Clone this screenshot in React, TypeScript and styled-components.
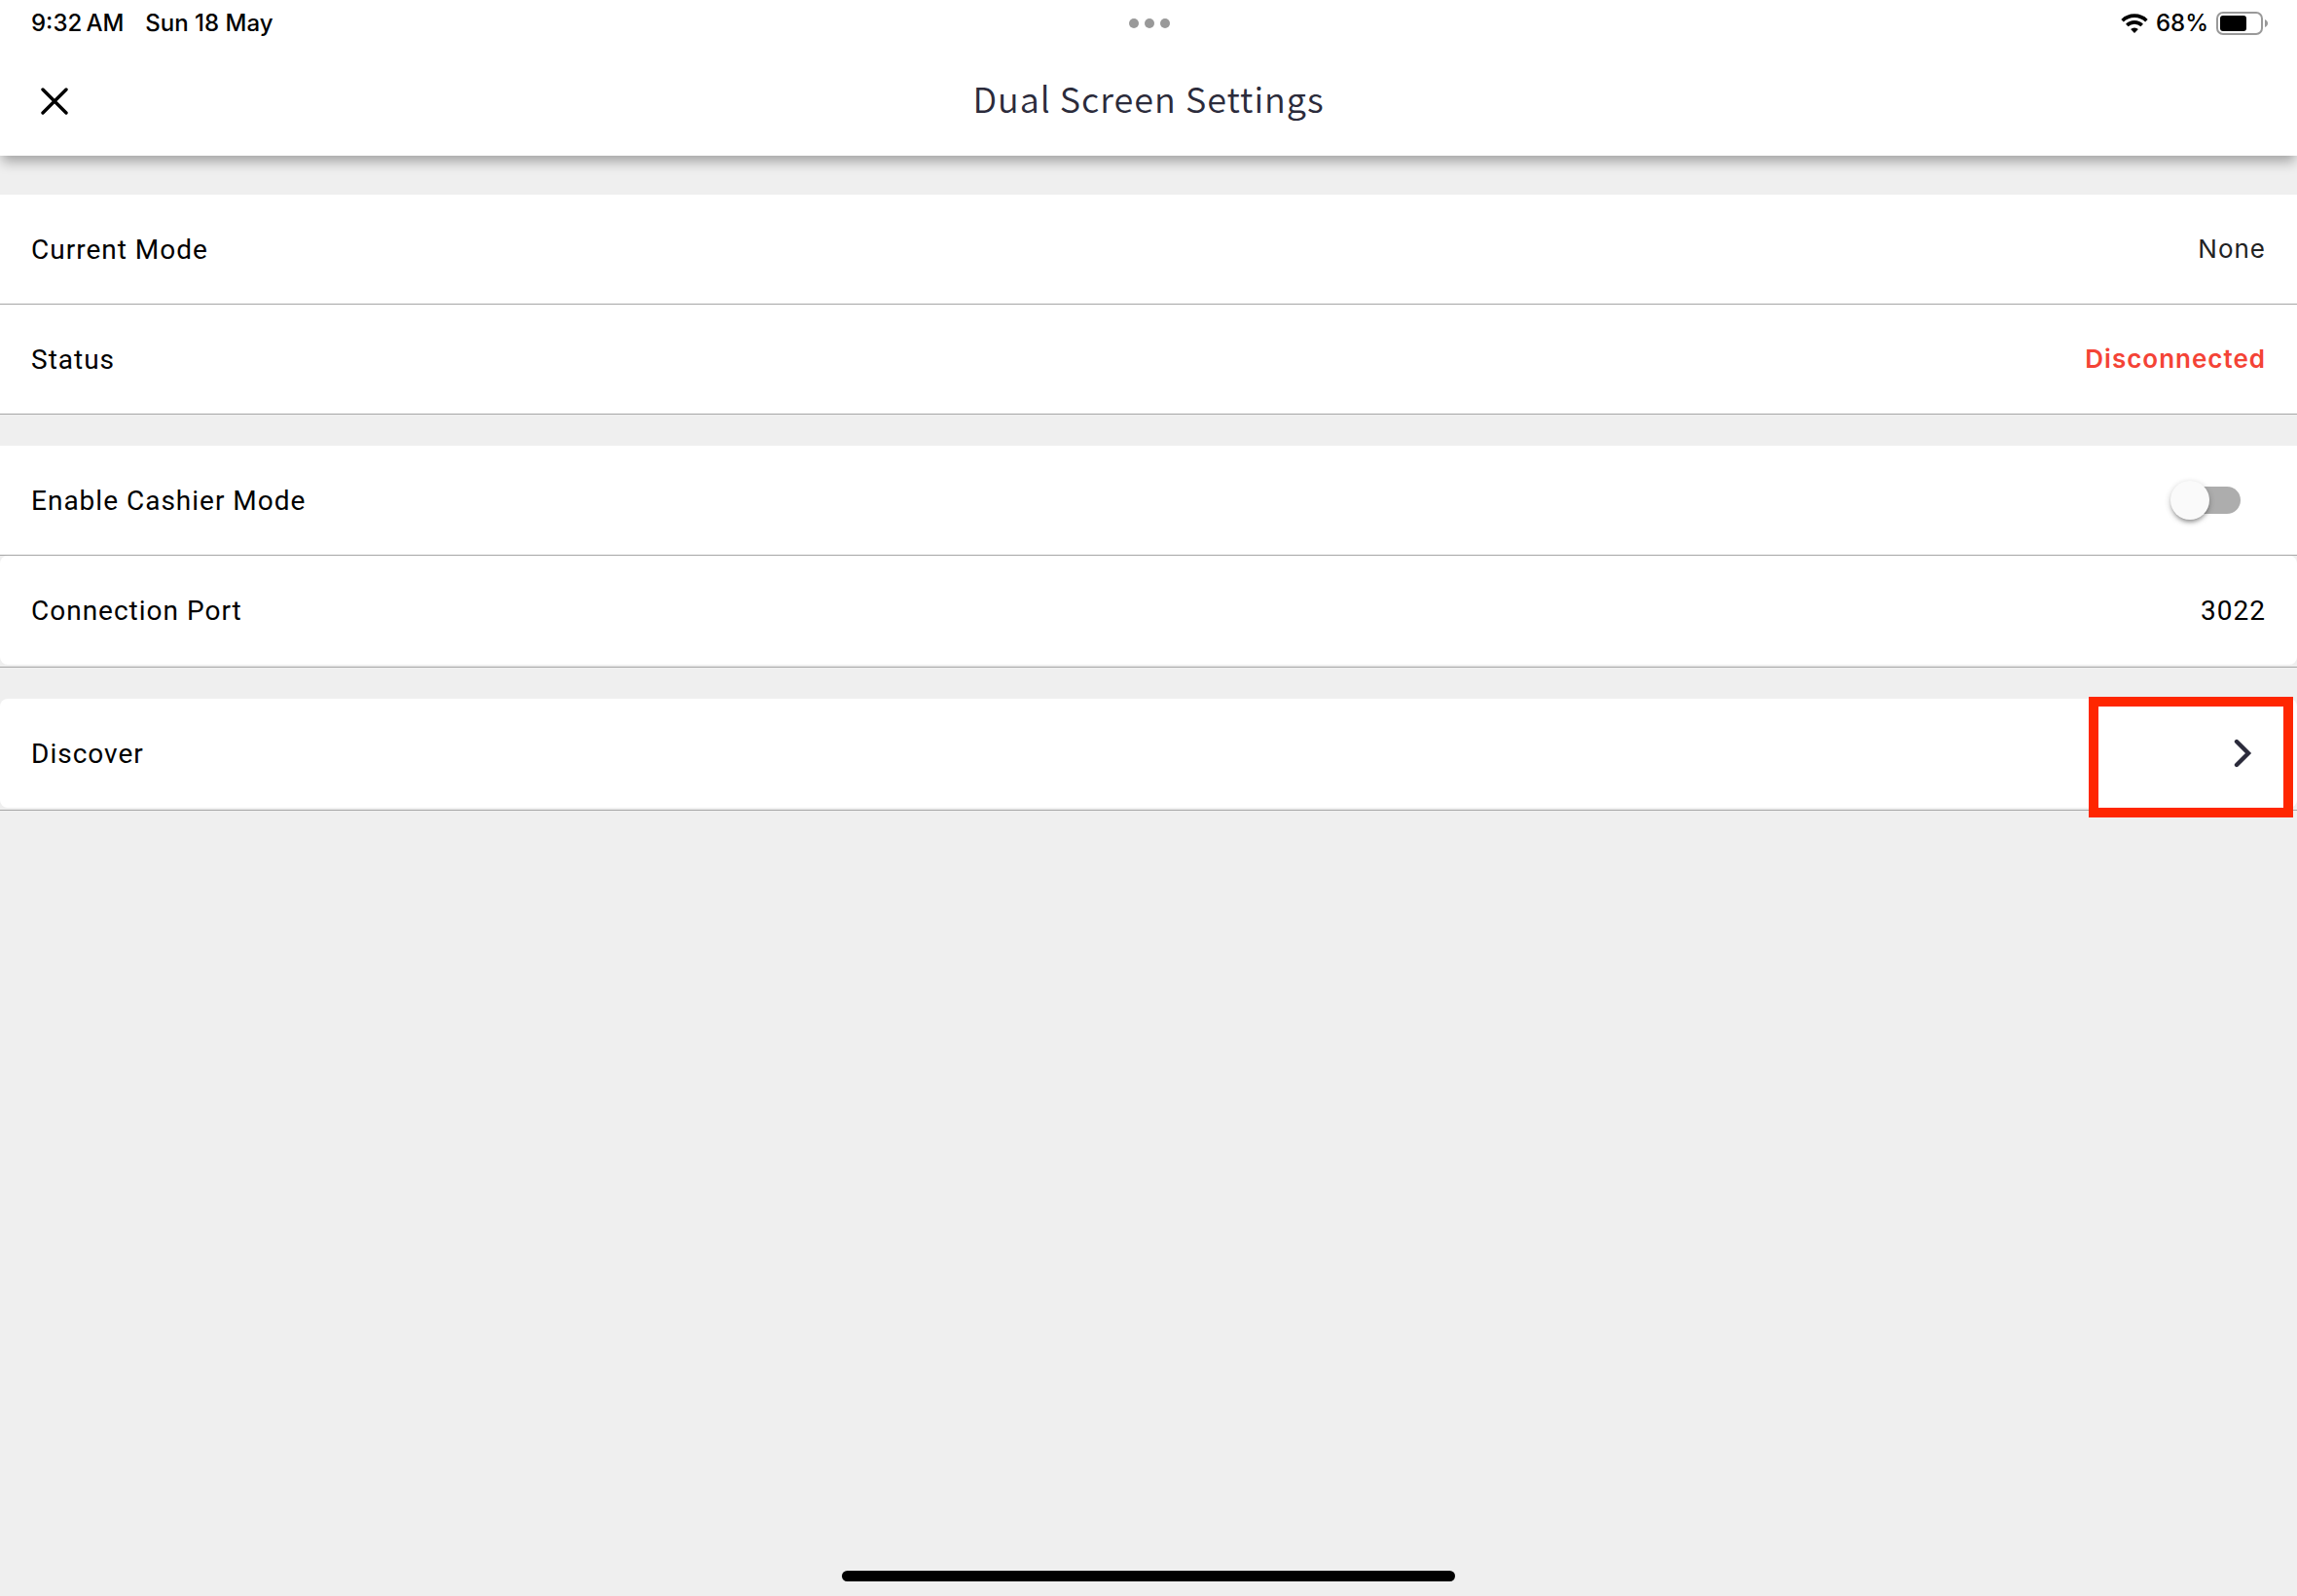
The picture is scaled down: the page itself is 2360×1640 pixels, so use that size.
import React, { useState } from "react";
import styled, { createGlobalStyle } from "styled-components";

const GlobalStyle = createGlobalStyle`
  * { box-sizing: border-box; }
  body { margin: 0; background: #efefef; }
`;

const roboto = `Roboto, "Noto Sans", sans-serif`;
const system = `Inter, "Liberation Sans", sans-serif`;

const Page = styled.div`
  display: flex;
  flex-direction: column;
  min-height: 100vh;
  background: #efefef;
  color: #000;
  font-family: ${roboto};
`;

const Header = styled.header`
  background: #fff;
  box-shadow: 0 8px 12px -2px rgba(0, 0, 0, 0.32);
`;

const StatusBar = styled.div`
  display: grid;
  grid-template-columns: 1fr auto 1fr;
  align-items: center;
  height: 48px;
  padding: 0 30px 0 32px;
  font: 500 24px/32px ${system};
`;

const StatusGroup = styled.div<{ $end?: boolean; $gap: number }>`
  display: flex;
  align-items: center;
  justify-content: ${(p) => (p.$end ? "flex-end" : "flex-start")};
  gap: ${(p) => p.$gap}px;
`;

const Dots = styled.div`
  display: flex;
  gap: 6px;
`;

const Dot = styled.span`
  width: 10px;
  height: 10px;
  border-radius: 50%;
  background: #999;
`;

const TitleBar = styled.div`
  display: grid;
  grid-template-columns: 1fr auto 1fr;
  align-items: center;
  height: 112px;
  padding: 0 32px;
`;

const CloseButton = styled.button`
  display: flex;
  align-items: center;
  justify-content: center;
  width: 48px;
  height: 48px;
  padding: 0;
  border: 0;
  background: none;
  cursor: pointer;
`;

const Title = styled.h1`
  margin: 0;
  padding-bottom: 8px;
  color: #2b2b3b;
  font: 350 36px/48px "Noto Sans CJK SC", "Noto Sans", sans-serif;
  letter-spacing: 1px;
`;

const Settings = styled.main`
  display: flex;
  flex-direction: column;
  gap: 32px;
  padding-top: 40px;
`;

const Group = styled.section`
  display: flex;
  flex-direction: column;
`;

const Item = styled.div<{ $card?: boolean }>`
  position: relative;
  padding-bottom: ${(p) => (p.$card ? 2 : 0)}px;
  border-bottom: 1px solid #a6a6a6;
`;

const Row = styled.div<{ $card?: boolean }>`
  display: flex;
  align-items: center;
  justify-content: space-between;
  width: 100%;
  height: 112px;
  padding: 0 32px;
  border: 0;
  border-radius: ${(p) => (p.$card ? 8 : 0)}px;
  background: #fff;
  color: #000;
  text-align: left;
  font: 400 28px/36px ${roboto};
  letter-spacing: 1px;
`;

const Label = styled.span`
  padding-top: 2px;
`;

const Value = styled.span<{ $alert?: boolean }>`
  color: ${(p) => (p.$alert ? "#f44336" : "#222")};
  font-family: ${system};
  font-size: 26px;
  font-weight: ${(p) => (p.$alert ? 600 : 400)};
`;

const PortInput = styled.input`
  width: 240px;
  padding: 2px 0 0;
  border: 0;
  background: none;
  color: inherit;
  font: inherit;
  letter-spacing: inherit;
  text-align: right;
`;

const Switch = styled.input`
  appearance: none;
  display: flex;
  align-items: center;
  width: 66px;
  height: 28px;
  margin: 0 26px;
  border-radius: 14px;
  background: #adadad;
  cursor: pointer;

  &::before {
    content: "";
    width: 40px;
    height: 40px;
    flex: none;
    margin-left: -6px;
    border-radius: 50%;
    background: #fafafa;
    box-shadow: 0 4px 4px -2px rgba(0, 0, 0, 0.3), 0 2px 6px rgba(0, 0, 0, 0.24);
  }

  &:checked {
    background: #80b0e8;
  }

  &:checked::before {
    margin-left: 32px;
  }
`;

const ChevronBox = styled.span`
  display: flex;
  justify-content: center;
  width: 48px;
`;

const Highlight = styled.div`
  position: absolute;
  top: -2px;
  right: 4px;
  bottom: -8px;
  width: 210px;
  border: 10px solid #ff2600;
  pointer-events: none;
`;

const HomeIndicator = styled.div`
  width: 630px;
  max-width: 80%;
  height: 11px;
  margin: auto auto 15px;
  border-radius: 6px;
  background: #000;
`;

const WifiIcon = () => (
  <svg width="28" height="20" viewBox="0 0 28 20" aria-hidden="true">
    <g fill="none" stroke="#000" strokeWidth="3.6">
      <path d="M1.6 7.2a17.8 17.8 0 0 1 24.8 0" />
      <path d="M6.3 12a11 11 0 0 1 15.4 0" />
    </g>
    <path d="M14 20l-3.9-3.9a5.6 5.6 0 0 1 7.8 0z" fill="#000" />
  </svg>
);

const BatteryIcon = () => (
  <svg width="53" height="24" viewBox="0 0 53 24" aria-hidden="true">
    <rect x="1" y="1" width="46" height="22" rx="6" fill="none" stroke="#999" strokeWidth="2" />
    <rect x="4" y="4" width="27" height="16" rx="3" fill="#000" />
    <path d="M50 8c4 1.500 4 6.500 0 8z" fill="#999" />
  </svg>
);

const CloseIcon = () => (
  <svg width="28" height="28" viewBox="0 0 28 28" aria-hidden="true">
    <path d="M2 2l24 24M26 2l-24 24" stroke="#000" strokeWidth="3.400" strokeLinecap="round" />
  </svg>
);

const ChevronIcon = () => (
  <svg width="20" height="32" viewBox="0 0 20 32" aria-hidden="true">
    <path d="M4 4l12 12-12 12" fill="none" stroke="#2b2b3b" strokeWidth="4.400" strokeLinecap="round" />
  </svg>
);

export default function App() {
  const [cashier, setCashier] = useState(false);
  const [port, setPort] = useState("3022");

  return (
    <Page>
      <GlobalStyle />
      <Header>
        <StatusBar>
          <StatusGroup $gap={22}>
            <span>9:32{"\u2009"}AM</span>
            <span>Sun 18 May</span>
          </StatusGroup>
          <Dots>
            <Dot />
            <Dot />
            <Dot />
          </Dots>
          <StatusGroup $end $gap={8}>
            <WifiIcon />
            <span>68%</span>
            <BatteryIcon />
          </StatusGroup>
        </StatusBar>
        <TitleBar>
          <CloseButton type="button" aria-label="Close">
            <CloseIcon />
          </CloseButton>
          <Title>Dual Screen Settings</Title>
        </TitleBar>
      </Header>
      <Settings>
        <Group>
          <Item>
            <Row>
              <Label>Current Mode</Label>
              <Value>None</Value>
            </Row>
          </Item>
          <Item>
            <Row>
              <Label>Status</Label>
              <Value $alert>Disconnected</Value>
            </Row>
          </Item>
        </Group>
        <Group>
          <Item>
            <Row>
              <Label as="label" htmlFor="cashier">Enable Cashier Mode</Label>
              <Switch
                id="cashier"
                type="checkbox"
                role="switch"
                checked={cashier}
                onChange={(e) => setCashier(e.target.checked)}
              />
            </Row>
          </Item>
          <Item $card>
            <Row $card>
              <Label as="label" htmlFor="port">Connection Port</Label>
              <PortInput id="port" inputMode="numeric" value={port} onChange={(e) => setPort(e.target.value)} />
            </Row>
          </Item>
        </Group>
        <Group>
          <Item $card>
            <Row as="button" type="button" $card>
              <Label>Discover</Label>
              <ChevronBox>
                <ChevronIcon />
              </ChevronBox>
            </Row>
            <Highlight />
          </Item>
        </Group>
      </Settings>
      <HomeIndicator />
    </Page>
  );
}
